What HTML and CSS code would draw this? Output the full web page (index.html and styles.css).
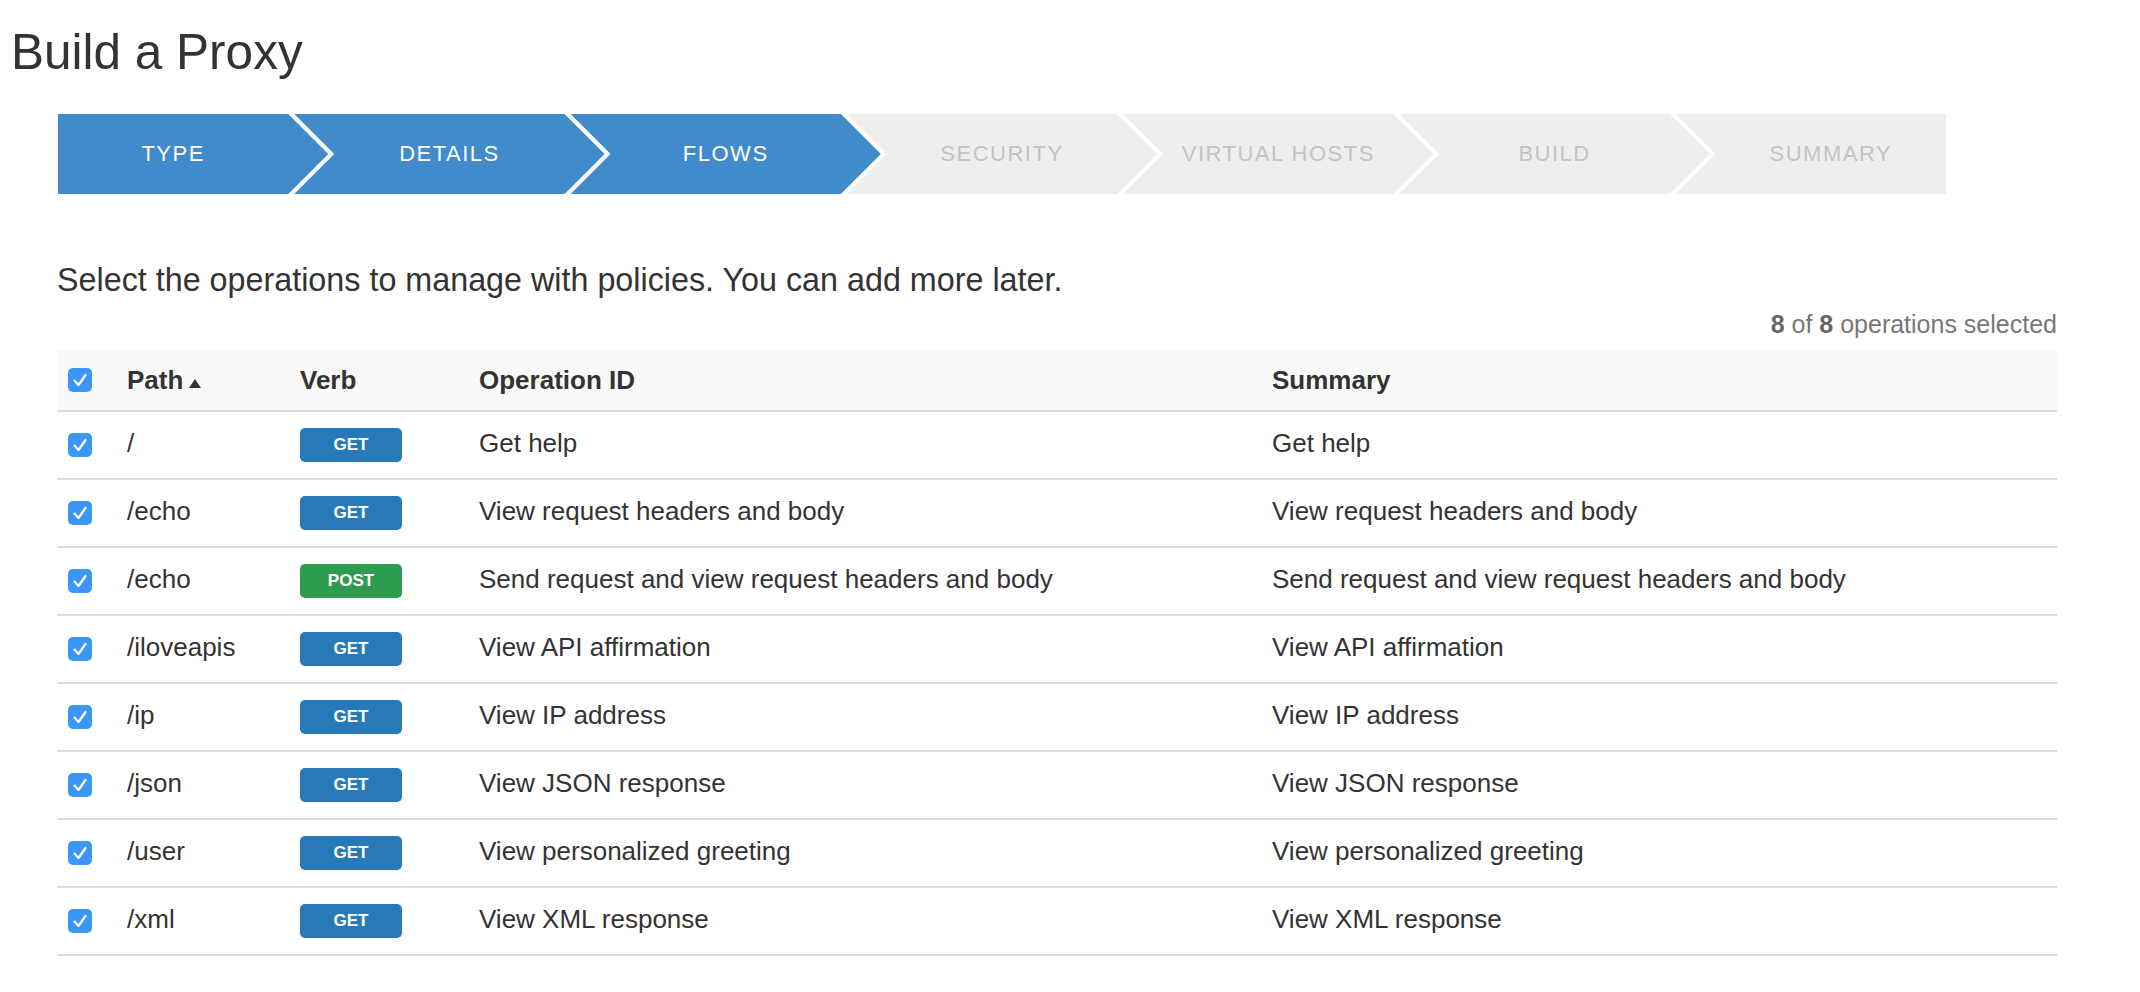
FILE: index.html
```html
<!DOCTYPE html>
<html lang="en">
<head>
<meta charset="utf-8">
<title>Build a Proxy</title>
<link rel="stylesheet" href="styles.css">
</head>
<body>
<div class="page">
  <h1 class="title">Build a Proxy</h1>
  <div class="content">
    <ol class="wizard">
      <li class="step done">TYPE</li>
      <li class="step done">DETAILS</li>
      <li class="step done">FLOWS</li>
      <li class="step">SECURITY</li>
      <li class="step">VIRTUAL HOSTS</li>
      <li class="step">BUILD</li>
      <li class="step">SUMMARY</li>
    </ol>

    <p class="lead">Select the operations to manage with policies. You can add more later.</p>
    <div class="count"><b>8</b> of <b>8</b> operations selected</div>

    <div class="ops">
      <div class="row head">
        <div class="cell chk"><span class="box"><svg viewBox="0 0 24 24"><path d="M6.5 12.5l4 4.5 7-10" fill="none" stroke="#fff" stroke-width="2.2" stroke-linecap="round" stroke-linejoin="round"/></svg></span></div>
        <div class="cell">Path<span class="sort"></span></div>
        <div class="cell">Verb</div>
        <div class="cell">Operation ID</div>
        <div class="cell">Summary</div>
      </div>

      <div class="row">
        <div class="cell chk"><span class="box"><svg viewBox="0 0 24 24"><path d="M6.5 12.5l4 4.5 7-10" fill="none" stroke="#fff" stroke-width="2.2" stroke-linecap="round" stroke-linejoin="round"/></svg></span></div>
        <div class="cell txt">/</div>
        <div class="cell"><span class="verb get">GET</span></div>
        <div class="cell txt">Get help</div>
        <div class="cell txt">Get help</div>
      </div>
      <div class="row">
        <div class="cell chk"><span class="box"><svg viewBox="0 0 24 24"><path d="M6.5 12.5l4 4.5 7-10" fill="none" stroke="#fff" stroke-width="2.2" stroke-linecap="round" stroke-linejoin="round"/></svg></span></div>
        <div class="cell txt">/echo</div>
        <div class="cell"><span class="verb get">GET</span></div>
        <div class="cell txt">View request headers and body</div>
        <div class="cell txt">View request headers and body</div>
      </div>
      <div class="row">
        <div class="cell chk"><span class="box"><svg viewBox="0 0 24 24"><path d="M6.5 12.5l4 4.5 7-10" fill="none" stroke="#fff" stroke-width="2.2" stroke-linecap="round" stroke-linejoin="round"/></svg></span></div>
        <div class="cell txt">/echo</div>
        <div class="cell"><span class="verb post">POST</span></div>
        <div class="cell txt">Send request and view request headers and body</div>
        <div class="cell txt">Send request and view request headers and body</div>
      </div>
      <div class="row">
        <div class="cell chk"><span class="box"><svg viewBox="0 0 24 24"><path d="M6.5 12.5l4 4.5 7-10" fill="none" stroke="#fff" stroke-width="2.2" stroke-linecap="round" stroke-linejoin="round"/></svg></span></div>
        <div class="cell txt">/iloveapis</div>
        <div class="cell"><span class="verb get">GET</span></div>
        <div class="cell txt">View API affirmation</div>
        <div class="cell txt">View API affirmation</div>
      </div>
      <div class="row">
        <div class="cell chk"><span class="box"><svg viewBox="0 0 24 24"><path d="M6.5 12.5l4 4.5 7-10" fill="none" stroke="#fff" stroke-width="2.2" stroke-linecap="round" stroke-linejoin="round"/></svg></span></div>
        <div class="cell txt">/ip</div>
        <div class="cell"><span class="verb get">GET</span></div>
        <div class="cell txt">View IP address</div>
        <div class="cell txt">View IP address</div>
      </div>
      <div class="row">
        <div class="cell chk"><span class="box"><svg viewBox="0 0 24 24"><path d="M6.5 12.5l4 4.5 7-10" fill="none" stroke="#fff" stroke-width="2.2" stroke-linecap="round" stroke-linejoin="round"/></svg></span></div>
        <div class="cell txt">/json</div>
        <div class="cell"><span class="verb get">GET</span></div>
        <div class="cell txt">View JSON response</div>
        <div class="cell txt">View JSON response</div>
      </div>
      <div class="row">
        <div class="cell chk"><span class="box"><svg viewBox="0 0 24 24"><path d="M6.5 12.5l4 4.5 7-10" fill="none" stroke="#fff" stroke-width="2.2" stroke-linecap="round" stroke-linejoin="round"/></svg></span></div>
        <div class="cell txt">/user</div>
        <div class="cell"><span class="verb get">GET</span></div>
        <div class="cell txt">View personalized greeting</div>
        <div class="cell txt">View personalized greeting</div>
      </div>
      <div class="row">
        <div class="cell chk"><span class="box"><svg viewBox="0 0 24 24"><path d="M6.5 12.5l4 4.5 7-10" fill="none" stroke="#fff" stroke-width="2.2" stroke-linecap="round" stroke-linejoin="round"/></svg></span></div>
        <div class="cell txt">/xml</div>
        <div class="cell"><span class="verb get">GET</span></div>
        <div class="cell txt">View XML response</div>
        <div class="cell txt">View XML response</div>
      </div>
    </div>
  </div>
</div>
</body>
</html>
```

FILE: styles.css
```css
html, body {
  margin: 0;
  padding: 0;
  background: #fff;
}

body {
  font-family: "Liberation Sans", Arial, Helvetica, sans-serif;
  color: #333;
}

.page {
  padding: 24px 10px 0 11px;
}

.title {
  margin: 0;
  font-size: 49.5px;
  line-height: 56px;
  font-weight: normal;
  color: #333;
}

.content {
  margin-left: 46px;
  width: 2000px;
}

/* wizard */
.wizard {
  list-style: none;
  margin: 34px 0 0 1px;
  padding: 0;
  width: 1888px;
  height: 80px;
  display: flex;
}

.step {
  flex: 1 1 0;
  height: 80px;
  padding: 0 40px;
  margin-left: -34px;
  display: flex;
  align-items: center;
  justify-content: center;
  background: #eeeeee;
  color: #c3c3c3;
  font-size: 22px;
  letter-spacing: 1.5px;
  white-space: nowrap;
  clip-path: polygon(0 0, calc(100% - 40px) 0, 100% 50%, calc(100% - 40px) 100%, 0 100%, 40px 50%);
}

.step:first-child {
  margin-left: 0;
  padding-left: 0;
  clip-path: polygon(0 0, calc(100% - 40px) 0, 100% 50%, calc(100% - 40px) 100%, 0 100%);
}

.step:last-child {
  padding-right: 0;
  clip-path: polygon(0 0, 100% 0, 100% 100%, 0 100%, 40px 50%);
}

.step.done {
  background: #428bca;
  color: #fff;
}

/* intro text */
.lead {
  margin: 66px 0 0 0;
  font-size: 32.3px;
  line-height: 40px;
  color: #333;
}

.count {
  margin-top: 9px;
  text-align: right;
  font-size: 25px;
  line-height: 30px;
  color: #777;
}

.count b {
  color: #666;
}

/* operations grid */
.ops {
  margin-top: 11px;
  font-size: 26px;
}

.row {
  display: grid;
  grid-template-columns: 58px 173px 179px 793px 797px;
  align-items: center;
  height: 66px;
  border-bottom: 2px solid #dddddd;
}

.row.head {
  height: 60px;
  background: #f9f9f9;
  font-weight: bold;
}

.cell {
  padding-left: 12px;
  white-space: nowrap;
}

.cell.txt {
  padding-bottom: 4px;
}

.cell.chk {
  padding-left: 11px;
  display: flex;
  align-items: center;
}

.box {
  display: block;
  width: 24px;
  height: 24px;
  border-radius: 5px;
  background: #3a97f8;
}

.box svg {
  display: block;
  width: 24px;
  height: 24px;
}

.sort {
  display: inline-block;
  margin-left: 6px;
  vertical-align: 1px;
  width: 0;
  height: 0;
  border-left: 6px solid transparent;
  border-right: 6px solid transparent;
  border-bottom: 9px solid #333;
}

.verb {
  display: flex;
  align-items: center;
  justify-content: center;
  width: 102px;
  height: 34px;
  border-radius: 5px;
  color: #fff;
  font-size: 17px;
  font-weight: bold;
}

.verb.get {
  background: #2779b8;
}

.verb.post {
  background: #2d9c4f;
}
```
